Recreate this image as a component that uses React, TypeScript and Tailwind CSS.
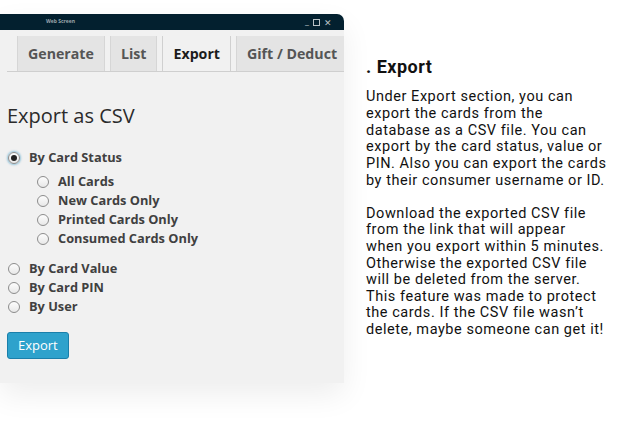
import React from "react";

const tabs = ["Generate", "List", "Export", "Gift / Deduct"];

function Radio({ checked = false }: { checked?: boolean }) {
  return (
    <span
      className={
        "relative inline-flex h-[12px] w-[12px] shrink-0 items-center justify-center rounded-full border border-[#8c8c8c] bg-gradient-to-b from-[#fdfdfd] to-[#e8e8e8] " +
        (checked ? "shadow-[0_0_2px_1px_rgba(30,140,190,0.45)]" : "")
      }
    >
      {checked && <span className="h-[6px] w-[6px] rounded-full bg-[#222]" />}
    </span>
  );
}

function Option({ label, checked, sub }: { label: string; checked?: boolean; sub?: boolean }) {
  return (
    <div className={"flex h-[19px] items-center " + (sub ? "pl-[37px]" : "pl-[8px]")}>
      <Radio checked={checked} />
      <span className="ml-[9px] text-[12.8px] font-bold text-[#404040]">{label}</span>
    </div>
  );
}

export default function App() {
  return (
    <div className="flex h-[432px] w-[636px] overflow-hidden bg-white">
      {/* app window */}
      <div className="w-[344px] shrink-0 pt-[14px]" style={{ fontFamily: '"Open Sans", sans-serif' }}>
        <div className="flex flex-col rounded-tr-[7px] shadow-[0_12px_30px_rgba(0,0,0,0.07)]">
          <div className="flex h-[16px] items-center justify-between rounded-tr-[7px] bg-[#03202f] pl-[46px] pr-[12px]">
            <span className="text-[5px] font-bold text-[#9aa5ab]">Web Screen</span>
            <span className="flex items-center gap-[4px] text-[9px] leading-none text-[#b9c1c5]">
              <span className="mt-[-3px]">_</span>
              <span className="h-[7px] w-[7px] border border-[#b9c1c5]" />
              <span>✕</span>
            </span>
          </div>
          <div className="h-[353px] bg-[#f1f1f1]">
            {/* tabs */}
            <div className="ml-[7px] mt-[6px] flex h-[36px] items-end gap-[5px] overflow-hidden border-b border-[#cfcfcf] pl-[10px]">
              {tabs.map((t) => {
                const active = t === "Export";
                return (
                  <div
                    key={t}
                    className={
                      "flex h-[36px] shrink-0 items-center border border-b-0 px-[10px] text-[14.2px] font-bold " +
                      (active
                        ? "mb-[-1px] h-[37px] border-[#d0d0d0] bg-[#f1f1f1] text-[#1c1c1c]"
                        : "border-[#d6d6d6] bg-[#e4e4e4] text-[#555]")
                    }
                  >
                    {t}
                  </div>
                );
              })}
            </div>

            <h2 className="ml-[7px] mt-[31px] text-[20px] leading-[26px] text-[#2b2b2b]">Export as CSV</h2>

            <div className="mt-[19px] flex flex-col">
              <Option label="By Card Status" checked />
              <div className="mt-[5px] flex flex-col">
                <Option label="All Cards" sub />
                <Option label="New Cards Only" sub />
                <Option label="Printed Cards Only" sub />
                <Option label="Consumed Cards Only" sub />
              </div>
              <div className="mt-[11px] flex flex-col">
                <Option label="By Card Value" />
                <Option label="By Card PIN" />
                <Option label="By User" />
              </div>
            </div>

            <button className="ml-[7px] mt-[16px] h-[27px] rounded-[3px] border border-[#1a7faa] bg-[#2ea2cc] px-[10px] text-[13px] text-white">
              Export
            </button>
          </div>
        </div>
      </div>

      {/* description */}
      <div className="flex-1 pl-[22px] pt-[56px] text-[#111]" style={{ fontFamily: "Roboto, sans-serif" }}>
        <h3 className="text-[18px] font-bold leading-[22px] tracking-[0.5px]">. Export</h3>
        <p className="mt-[11px] text-[14.5px] leading-[16.8px] tracking-[0.55px]">
          Under Export section, you can
          <br />
          export the cards from the
          <br />
          database as a CSV file. You can
          <br />
          export by the card status, value or
          <br />
          PIN. Also you can export the cards
          <br />
          by their consumer username or ID.
        </p>
        <p className="mt-[16px] text-[14.5px] leading-[16.6px] tracking-[0.55px]">
          Download the exported CSV file
          <br />
          from the link that will appear
          <br />
          when you export within 5 minutes.
          <br />
          Otherwise the exported CSV file
          <br />
          will be deleted from the server.
          <br />
          This feature was made to protect
          <br />
          the cards. If the CSV file wasn’t
          <br />
          delete, maybe someone can get it!
        </p>
      </div>
    </div>
  );
}
